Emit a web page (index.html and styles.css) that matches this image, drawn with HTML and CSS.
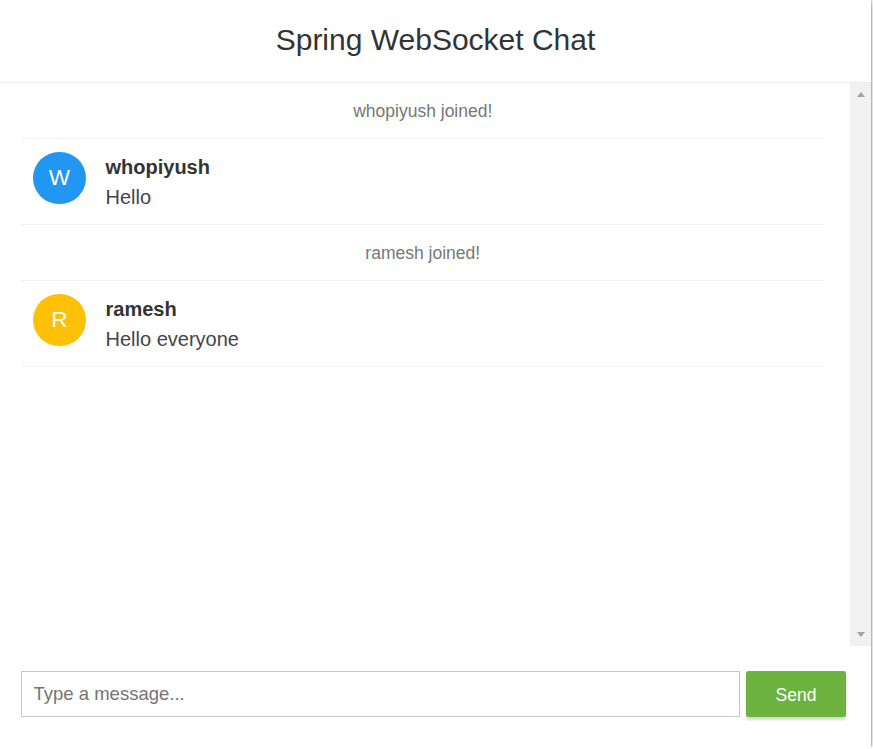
FILE: index.html
```html
<!DOCTYPE html>
<html>
<head>
<meta charset="utf-8">
<title>Spring WebSocket Chat</title>
<link rel="stylesheet" href="styles.css">
</head>
<body>
<div class="chat-container">
  <div class="chat-header">
    <h2>Spring WebSocket Chat</h2>
  </div>
  <div class="message-pane">
    <ul class="message-area">
      <li class="event-message"><p>whopiyush joined!</p></li>
      <li class="chat-message">
        <i class="avatar avatar-blue">W</i>
        <span class="sender">whopiyush</span>
        <p>Hello</p>
      </li>
      <li class="event-message"><p>ramesh joined!</p></li>
      <li class="chat-message">
        <i class="avatar avatar-yellow">R</i>
        <span class="sender">ramesh</span>
        <p>Hello everyone</p>
      </li>
    </ul>
    <div class="scrollbar">
      <span class="arrow arrow-up"></span>
      <span class="arrow arrow-down"></span>
    </div>
  </div>
  <form class="message-form">
    <input type="text" class="message-input" placeholder="Type a message...">
    <button type="button" class="send-btn">Send</button>
  </form>
</div>
</body>
</html>
```

FILE: styles.css
```css
html, body {
  margin: 0;
  padding: 0;
  background: #fff;
  overflow: hidden;
}

body {
  font-family: "Liberation Sans", Arial, Helvetica, sans-serif;
  color: #333;
}

.chat-container {
  width: 871px;
  height: 747px;
  background: #fff;
  box-shadow: 1px 1px 0 rgba(0, 0, 0, 0.16), 0 1px 11px rgba(0, 0, 0, 0.3);
  display: flex;
  flex-direction: column;
}

.chat-header {
  text-align: center;
  padding: 18px 0 20px;
  border-bottom: 1px solid #ececec;
}

.chat-header h2 {
  margin: 0;
  font-size: 30px;
  line-height: 44px;
  font-weight: 500;
  color: #333;
}

.message-pane {
  display: flex;
  height: 563px;
}

.message-area {
  flex: 1;
  list-style: none;
  margin: 0;
  padding: 0 25px 0 20.5px;
  overflow: hidden;
}

.message-area li {
  line-height: 30px;
  padding: 12.5px 25px;
  border-bottom: 1px solid #f4f4f4;
}

.message-area li p {
  margin: 0;
}

.event-message {
  text-align: center;
}

.event-message p {
  color: #777;
  font-size: 17.5px;
}

.chat-message {
  position: relative;
  padding-left: 85px !important;
  font-size: 20px;
}

.avatar {
  position: absolute;
  left: 12.5px;
  width: 52.5px;
  height: 52.5px;
  border-radius: 50%;
  color: #fff;
  font-style: normal;
  font-size: 22.5px;
  line-height: 52.5px;
  text-align: center;
}

.avatar-blue {
  background: #2196f3;
}

.avatar-yellow {
  background: #ffc107;
}

.sender {
  color: #333;
  font-weight: 700;
}

.chat-message p {
  color: #43464b;
}

.scrollbar {
  width: 21px;
  background: #f1f1f1;
  display: flex;
  flex-direction: column;
  justify-content: space-between;
  align-items: center;
  padding: 9px 0;
  box-sizing: border-box;
}

.arrow {
  width: 0;
  height: 0;
  border-left: 4.5px solid transparent;
  border-right: 4.5px solid transparent;
}

.arrow-up {
  border-bottom: 5px solid #a3a3a3;
}

.arrow-down {
  border-top: 5px solid #a3a3a3;
}

.message-form {
  display: flex;
  gap: 6.25px;
  padding: 25px 25px 30px 20.5px;
  margin: 0;
}

.message-input {
  flex: 1;
  min-width: 0;
  height: 46.5px;
  box-sizing: border-box;
  border: 1px solid #c8c8c8;
  padding: 0 12px;
  font-family: "Liberation Sans", Arial, sans-serif;
  font-size: 18.5px;
  color: #333;
  outline: none;
  border-radius: 0;
}

.message-input::placeholder {
  color: #757575;
}

.send-btn {
  width: 100px;
  height: 46.5px;
  border: none;
  border-radius: 2.5px;
  background: #6db33f;
  color: #fff;
  font-family: "Liberation Sans", Arial, sans-serif;
  font-size: 17.5px;
  line-height: 46.5px;
  padding: 0;
  padding-top: 1px;
  box-shadow: 0 2.5px 2.5px 0 rgba(0, 0, 0, 0.15);
  cursor: pointer;
}
```
